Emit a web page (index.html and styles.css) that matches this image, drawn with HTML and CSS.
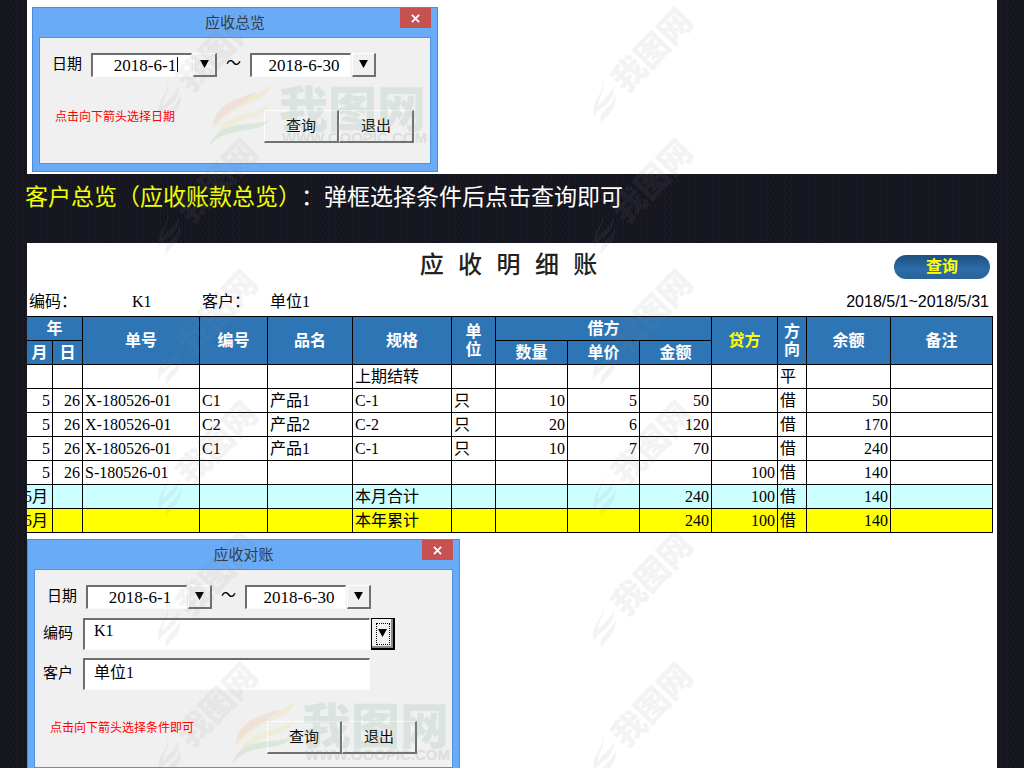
FILE: index.html
```html
<!DOCTYPE html>
<html lang="zh-CN">
<head>
<meta charset="utf-8">
<title>应收明细账</title>
<link rel="stylesheet" href="styles.css">
</head>
<body>
<svg class="defs" aria-hidden="true">
  <symbol id="brand" viewBox="0 0 218 62">
    <path fill="#f3d36a" d="M62 0C60 22 22 16 6 46C10 10 48 18 62 0Z"/>
    <path fill="#f0a070" d="M48 8C30 14 4 20 4 44C16 24 36 22 48 8Z"/>
    <path fill="#e6df7a" d="M62 18C58 38 24 30 6 56C14 24 48 34 62 18Z"/>
    <path fill="#7cc48a" d="M60 36C50 52 20 40 0 62C12 34 40 44 60 36Z"/>
    <text x="70" y="43" class="brand-name">我图网</text>
    <text x="73" y="59" class="brand-url">WWW.OOOPIC.COM</text>
  </symbol>
  <symbol id="stamp" viewBox="0 0 112 122" overflow="visible">
    <path d="M9 71C13 85 -3 90 1 108C7 96 21 96 21 77C16 88 8 91 5 98C4 88 14 83 9 71Z"/>
    <path d="M22 84C21 101 5 98 8 115C14 104 25 102 22 84Z"/>
    <text x="59" y="53" text-anchor="middle" transform="rotate(-46 59 41)">我图网</text>
  </symbol>
</svg>

<main class="page">
  <section class="panel panel-overview">
    <form class="dialog dialog-overview">
      <header class="titlebar">
        <h2>应收总览</h2>
        <button type="button" class="close" aria-label="关闭"><svg viewBox="0 0 10 10"><path d="M1 1L9 9M9 1L1 9"/></svg></button>
      </header>
      <div class="client">
        <div class="field-row dates">
          <label for="from1">日期</label>
          <span class="combo active"><input id="from1" class="date" value="2018-6-1"><button type="button" class="arrow" aria-label="选择开始日期"><svg viewBox="0 0 10 9"><path d="M0 0H10L5 9Z"/></svg></button></span>
          <span class="tilde">～</span>
          <span class="combo"><input class="date" aria-label="结束日期" value="2018-6-30"><button type="button" class="arrow" aria-label="选择结束日期"><svg viewBox="0 0 10 9"><path d="M0 0H10L5 9Z"/></svg></button></span>
        </div>
        <div class="footer-row">
          <p class="note">点击向下箭头选择日期</p>
          <div class="actions"><button type="button">查询</button><button type="button">退出</button></div>
        </div>
        <svg class="brand" aria-hidden="true"><use href="#brand"/></svg>
      </div>
    </form>
  </section>

  <h1 class="caption"><span>客户总览（应收账款总览）</span>：弹框选择条件后点击查询即可</h1>

  <section class="panel panel-ledger">
    <header class="ledger-head">
      <h2>应 收 明 细 账</h2>
      <button type="button" class="query">查询</button>
    </header>
    <div class="info">
      <span>编码：</span><span>K1</span><span>客户：</span><span>单位1</span><span class="period">2018/5/1~2018/5/31</span>
    </div>
    <table class="ledger">
      <colgroup><col class="w26"><col class="w30"><col class="w117"><col class="w68"><col class="w85"><col class="w99"><col class="w44"><col class="w72"><col class="w72"><col class="w72"><col class="w66"><col class="w29"><col class="w84"><col></colgroup>
      <thead>
        <tr><th colspan="2">年</th><th rowspan="2">单号</th><th rowspan="2">编号</th><th rowspan="2">品名</th><th rowspan="2">规格</th><th rowspan="2" class="stack">单<br>位</th><th colspan="3">借方</th><th rowspan="2" class="credit">贷方</th><th rowspan="2" class="stack">方<br>向</th><th rowspan="2">余额</th><th rowspan="2">备注</th></tr>
        <tr><th>月</th><th>日</th><th>数量</th><th>单价</th><th>金额</th></tr>
      </thead>
      <tbody>
        <tr><td></td><td></td><td></td><td></td><td></td><td>上期结转</td><td></td><td></td><td></td><td></td><td></td><td>平</td><td></td><td></td></tr>
        <tr><td class="n">5</td><td class="n">26</td><td>X-180526-01</td><td>C1</td><td>产品1</td><td>C-1</td><td>只</td><td class="n">10</td><td class="n">5</td><td class="n">50</td><td></td><td>借</td><td class="n">50</td><td></td></tr>
        <tr><td class="n">5</td><td class="n">26</td><td>X-180526-01</td><td>C2</td><td>产品2</td><td>C-2</td><td>只</td><td class="n">20</td><td class="n">6</td><td class="n">120</td><td></td><td>借</td><td class="n">170</td><td></td></tr>
        <tr><td class="n">5</td><td class="n">26</td><td>X-180526-01</td><td>C1</td><td>产品1</td><td>C-1</td><td>只</td><td class="n">10</td><td class="n">7</td><td class="n">70</td><td></td><td>借</td><td class="n">240</td><td></td></tr>
        <tr><td class="n">5</td><td class="n">26</td><td>S-180526-01</td><td></td><td></td><td></td><td></td><td></td><td></td><td></td><td class="n">100</td><td>借</td><td class="n">140</td><td></td></tr>
        <tr class="month"><td class="clip"><div>5月</div></td><td></td><td></td><td></td><td></td><td>本月合计</td><td></td><td></td><td></td><td class="n">240</td><td class="n">100</td><td>借</td><td class="n">140</td><td></td></tr>
        <tr class="year"><td class="clip"><div>5月</div></td><td></td><td></td><td></td><td></td><td>本年累计</td><td></td><td></td><td></td><td class="n">240</td><td class="n">100</td><td>借</td><td class="n">140</td><td></td></tr>
      </tbody>
    </table>

    <form class="dialog dialog-check">
      <header class="titlebar">
        <h2>应收对账</h2>
        <button type="button" class="close" aria-label="关闭"><svg viewBox="0 0 10 10"><path d="M1 1L9 9M9 1L1 9"/></svg></button>
      </header>
      <div class="client">
        <div class="field-row dates">
          <label for="from2">日期</label>
          <span class="combo"><input id="from2" class="date" value="2018-6-1"><button type="button" class="arrow" aria-label="选择开始日期"><svg viewBox="0 0 10 9"><path d="M0 0H10L5 9Z"/></svg></button></span>
          <span class="tilde">～</span>
          <span class="combo"><input class="date" aria-label="结束日期" value="2018-6-30"><button type="button" class="arrow" aria-label="选择结束日期"><svg viewBox="0 0 10 9"><path d="M0 0H10L5 9Z"/></svg></button></span>
        </div>
        <div class="field-row wide">
          <label for="code">编码</label>
          <span class="combo"><input id="code" class="long" value="K1"><button type="button" class="arrow focused" aria-label="选择编码"><svg viewBox="0 0 10 9"><path d="M0 0H10L5 9Z"/></svg></button></span>
        </div>
        <div class="field-row wide">
          <label for="client">客户</label>
          <input id="client" class="long" value="单位1">
        </div>
        <div class="footer-row">
          <p class="note">点击向下箭头选择条件即可</p>
          <div class="actions"><button type="button">查询</button><button type="button">退出</button></div>
        </div>
        <svg class="brand" aria-hidden="true"><use href="#brand"/></svg>
      </div>
    </form>
  </section>
</main>

<svg class="stamps" aria-hidden="true">
  <g id="column">
    <use href="#stamp" x="158" y="9" width="112" height="122"/>
    <use href="#stamp" x="158" y="140" width="112" height="122"/>
    <use href="#stamp" x="158" y="271" width="112" height="122"/>
    <use href="#stamp" x="158" y="402" width="112" height="122"/>
    <use href="#stamp" x="158" y="533" width="112" height="122"/>
    <use href="#stamp" x="158" y="664" width="112" height="122"/>
  </g>
  <use href="#column" x="435"/>
</svg>
</body>
</html>
```
FILE: styles.css
```css
* { box-sizing: border-box; }

body {
  margin: 0;
  height: 100vh;
  overflow: hidden;
  position: relative;
  background-color: #171722;
  background-image:
    repeating-linear-gradient(60deg, rgba(255, 255, 255, .025) 0 1px, transparent 1px 4px),
    repeating-linear-gradient(90deg, rgba(0, 0, 0, .2) 0 1px, transparent 1px 3px);
  color: #000;
  font: 16px/24px "Liberation Serif", "Noto Sans CJK SC", serif;
}

h1, h2, p { margin: 0; font-weight: 400; }
input, button { font: inherit; color: inherit; margin: 0; border-radius: 0; }

.defs { position: absolute; width: 0; height: 0; }

.page { height: 100%; padding: 0 27px; display: flex; flex-direction: column; }
.panel { background: #fff; }
.panel-overview { padding: 7px 5px 2px; }
.panel-ledger { flex: 1; }

.caption {
  margin-left: -2px;
  padding: 4px 0 31px;
  font: 23px/34px "Noto Sans CJK SC", sans-serif;
  text-spacing-trim: space-all;
  color: #fff;
}
.caption span { color: #f0ff00; }

/* Dialog windows */
.dialog {
  display: flex;
  flex-direction: column;
  padding: 0 6px 7px;
  background: #6aabf7;
  border: 1px solid #4a8ddb;
}
.dialog-overview { width: 406px; }
.dialog-check { width: 433px; margin-top: 6px; }
.titlebar { position: relative; height: 29px; }
.titlebar h2 {
  text-align: center;
  font: 15px/27px "Noto Sans CJK SC", sans-serif;
  color: #2b3a4c;
}
.close {
  position: absolute;
  top: 0;
  right: 0;
  width: 31px;
  height: 20px;
  padding: 0;
  border: 0;
  background: #c75050;
  display: grid;
  place-items: center;
}
.close svg { width: 9px; height: 9px; fill: none; stroke: #fff; stroke-width: 2; }

.client {
  position: relative;
  background: #f0f0f0;
  border: 1px solid #4f92e0;
  font-size: 15px;
}
.dialog-overview .client { height: 127px; padding: 15px 12px; }
.dialog-check .client { height: 199px; padding: 15px 8px; }
.field-row { display: flex; align-items: center; }
.field-row label { width: 39px; line-height: 20px; padding-bottom: 3px; }
.dialog-check .dates { padding-left: 4px; }
.dialog-check .wide { height: 32px; margin-top: 8px; }
.dialog-check .dates + .wide { margin-top: 9px; }
.wide label { width: 40px; }
.combo { position: relative; display: flex; gap: 1px; }
input {
  padding: 0;
  background: #fff;
  outline: 0;
  border: solid;
  border-width: 2px 1px 1px 2px;
  border-color: #6d6d6d #fafafa #fafafa #6d6d6d;
}
.date { width: 101px; height: 24px; padding: 0 0 0 6px; text-align: center; font-size: 17px; }
.active::after {
  content: "";
  position: absolute;
  left: 86px;
  top: 4px;
  width: 1px;
  height: 15px;
  background: #000;
}
.long { width: 287px; height: 32px; padding: 0 0 7px 9px; font-size: 16px; }
.arrow {
  width: 24px;
  padding: 0 0 2px;
  display: grid;
  place-items: center;
  background: #f0f0f0;
  border: solid;
  border-width: 1px 2px 2px 1px;
  border-color: #fff #707070 #707070 #fff;
}
.arrow svg { width: 9px; height: 8px; }
.focused { border: 2px solid #000; border-width: 1px 2px 2px 1px; outline: 1px dotted #000; outline-offset: -6px; box-shadow: inset -2px -2px #8a8a8a; }
.tilde { width: 33px; padding-bottom: 4px; text-align: center; line-height: 20px; }

.footer-row { position: relative; display: flex; justify-content: space-between; align-items: flex-start; }
.dialog-overview .footer-row { padding: 33px 4px 0 3px; }
.dialog-check .footer-row { padding: 31px 27px 0 7px; }
.note { font-size: 12px; line-height: 14px; color: #f00; }
.actions { display: flex; }
.actions button {
  width: 75px;
  height: 33px;
  padding: 0;
  background: #f0f0f0;
  border: solid;
  border-width: 1px 2px 2px 1px;
  border-color: #fff #707070 #707070 #fff;
}
.brand {
  position: absolute;
  right: 3px;
  bottom: 17px;
  width: 218px;
  height: 62px;
  opacity: .18;
  pointer-events: none;
}
.dialog-check .brand { right: 2px; bottom: 4px; }
.brand-name { font: 900 49px "Noto Sans CJK SC", sans-serif; fill: #7fae98; }
.brand-url { font: 700 15px "Liberation Sans", sans-serif; fill: #80908a; }

/* Ledger sheet */
.ledger-head {
  display: grid;
  grid-template-columns: 1fr auto 1fr;
  align-items: center;
  height: 48px;
  padding: 0 7px 0 0;
}
.ledger-head h2 { grid-column: 2; font: 500 24px/32px "Liberation Mono", "Noto Sans CJK SC", monospace; color: #222; }
.query {
  justify-self: end;
  width: 96px;
  height: 24px;
  padding: 0;
  border: 0;
  border-radius: 12px;
  background: linear-gradient(#1f4f80, #2b6ca9 60%, #2a6298);
  color: #ff0;
  font-weight: 700;
}
.info {
  display: grid;
  grid-template-columns: 103px 70px 68px 1fr auto;
  height: 25px;
  padding: 0 8px 0 2px;
  line-height: 22px;
}
.period { font-family: "Liberation Sans", sans-serif; }

.ledger {
  width: calc(100% - 4px);
  table-layout: fixed;
  border-collapse: separate;
  border-spacing: 0;
  border-top: 1px solid #000;
}
.ledger th, .ledger td {
  height: 24px;
  padding: 0 2px;
  border: solid #000;
  border-width: 0 1px 1px 0;
  line-height: 20px;
  text-align: left;
  white-space: nowrap;
}
.ledger th { background: #2e75b6; color: #fff; text-align: center; font-weight: 700; padding: 0; }
.ledger .credit { color: #ff0; }
.ledger .stack { line-height: 18px; }
.ledger .n { text-align: right; }
.ledger .clip { padding: 0 4px 0 0; }
.clip div { display: flex; justify-content: flex-end; overflow: hidden; }
.month { background: #ccffff; }
.year { background: #ffff00; }
.w26 { width: 26px; } .w29 { width: 29px; } .w30 { width: 30px; }
.w44 { width: 44px; } .w66 { width: 66px; } .w68 { width: 68px; }
.w72 { width: 72px; } .w84 { width: 84px; } .w85 { width: 85px; }
.w99 { width: 99px; } .w117 { width: 117px; }

/* Repeated diagonal mark over the whole page */
.stamps {
  position: absolute;
  inset: 0;
  width: 100%;
  height: 100%;
  pointer-events: none;
  fill: #888;
  opacity: .09;
  font: 900 33px "Noto Sans CJK SC", sans-serif;
}
```
